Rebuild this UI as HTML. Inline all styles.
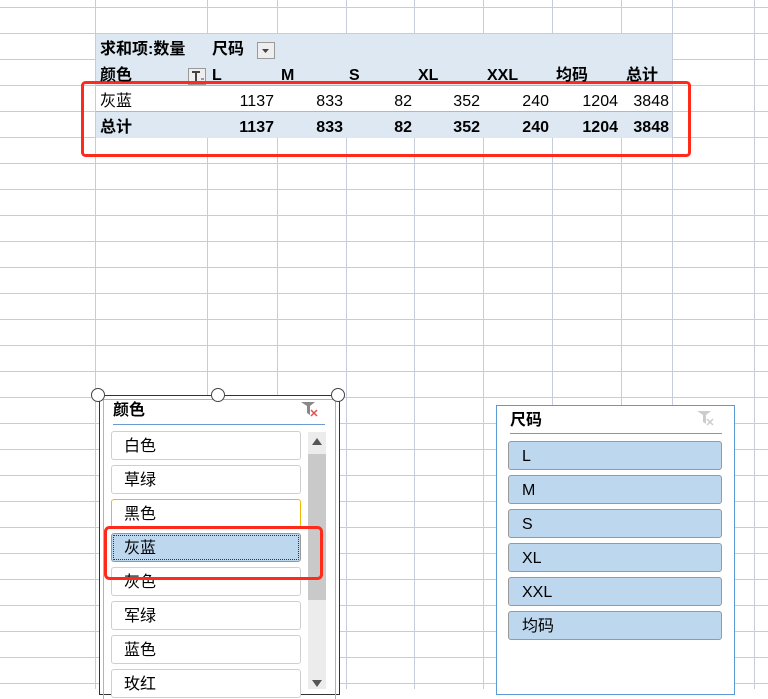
<!DOCTYPE html>
<html><head><meta charset="utf-8"><style>
body{margin:0;width:768px;height:689px;overflow:hidden;background:#fff;position:relative;font-family:"Liberation Sans","Noto Sans CJK SC",sans-serif;}
.a{position:absolute}
.t{position:absolute;font-size:16px;line-height:26px;white-space:nowrap;color:#000}
.r{text-align:right}
.b{font-weight:bold}
.it{position:absolute;left:111px;width:176px;height:27px;border:1px solid #cfcfcf;border-radius:3px;background:#fff;font-size:16px;line-height:29px;padding-left:12px;box-sizing:content-box}
.it2{position:absolute;left:508px;width:212px;height:27px;border:1px solid #999;border-radius:3px;background:#bdd7ee;font-size:16px;line-height:29px;text-indent:13px}
</style></head><body>
<svg class="a" style="left:0;top:0" width="768" height="689">
<g stroke="#c6ccda" stroke-width="1">
<line x1="95.5" y1="0" x2="95.5" y2="689"/><line x1="207.5" y1="0" x2="207.5" y2="689"/><line x1="277.5" y1="0" x2="277.5" y2="689"/><line x1="346.5" y1="0" x2="346.5" y2="689"/><line x1="414.5" y1="0" x2="414.5" y2="689"/><line x1="483.5" y1="0" x2="483.5" y2="689"/><line x1="552.5" y1="0" x2="552.5" y2="689"/><line x1="621.5" y1="0" x2="621.5" y2="689"/><line x1="672.5" y1="0" x2="672.5" y2="689"/><line x1="754.5" y1="0" x2="754.5" y2="689"/>
<line x1="0" y1="7.5" x2="768" y2="7.5"/><line x1="0" y1="33.5" x2="768" y2="33.5"/><line x1="0" y1="59.5" x2="768" y2="59.5"/><line x1="0" y1="85.5" x2="768" y2="85.5"/><line x1="0" y1="111.5" x2="768" y2="111.5"/><line x1="0" y1="137.5" x2="768" y2="137.5"/><line x1="0" y1="163.5" x2="768" y2="163.5"/><line x1="0" y1="189.5" x2="768" y2="189.5"/><line x1="0" y1="215.5" x2="768" y2="215.5"/><line x1="0" y1="241.5" x2="768" y2="241.5"/><line x1="0" y1="267.5" x2="768" y2="267.5"/><line x1="0" y1="293.5" x2="768" y2="293.5"/><line x1="0" y1="319.5" x2="768" y2="319.5"/><line x1="0" y1="345.5" x2="768" y2="345.5"/><line x1="0" y1="371.5" x2="768" y2="371.5"/><line x1="0" y1="397.5" x2="768" y2="397.5"/><line x1="0" y1="423.5" x2="768" y2="423.5"/><line x1="0" y1="449.5" x2="768" y2="449.5"/><line x1="0" y1="475.5" x2="768" y2="475.5"/><line x1="0" y1="501.5" x2="768" y2="501.5"/><line x1="0" y1="527.5" x2="768" y2="527.5"/><line x1="0" y1="553.5" x2="768" y2="553.5"/><line x1="0" y1="579.5" x2="768" y2="579.5"/><line x1="0" y1="605.5" x2="768" y2="605.5"/><line x1="0" y1="631.5" x2="768" y2="631.5"/><line x1="0" y1="657.5" x2="768" y2="657.5"/><line x1="0" y1="683.5" x2="768" y2="683.5"/>
</g>
<rect x="96" y="34" width="576" height="52" fill="#dde8f3"/>
<rect x="96" y="86" width="576" height="26" fill="#fff"/>
<rect x="96" y="112" width="576" height="26" fill="#dde8f3"/>
<line x1="96" y1="85.5" x2="672" y2="85.5" stroke="#9fbadb"/>
<line x1="96" y1="111.5" x2="672" y2="111.5" stroke="#9fbadb"/>
<rect x="257.5" y="42.5" width="17" height="16" fill="#eee" stroke="#999"/>
<path d="M262 49h7l-3.5 4z" fill="#444"/>
<rect x="188.5" y="68.5" width="17" height="16" fill="#eee" stroke="#999"/>
<path d="M192 72h8M196 72v9" stroke="#444" stroke-width="2"/><path d="M201 79h3" stroke="#444"/>
<rect x="82.5" y="82.5" width="607" height="73" rx="3" fill="none" stroke="#ff2a1a" stroke-width="3"/>
</svg>
<div class="t b" style="left:100px;top:37px">求和项:数量</div>
<div class="t b" style="left:212px;top:37px">尺码</div>
<div class="t b" style="left:100px;top:63px">颜色</div>
<div class="t b" style="left:212px;top:63px">L</div>
<div class="t b" style="left:281px;top:63px">M</div>
<div class="t b" style="left:349px;top:63px">S</div>
<div class="t b" style="left:418px;top:63px">XL</div>
<div class="t b" style="left:487px;top:63px">XXL</div>
<div class="t b" style="left:556px;top:63px">均码</div>
<div class="t b" style="left:626px;top:63px">总计</div>
<div class="t" style="left:100px;top:89px">灰蓝</div>
<div class="t b" style="left:100px;top:115px">总计</div>
<div class="t r" style="left:200px;width:74px;top:89px">1137</div>
<div class="t r" style="left:280px;width:63px;top:89px">833</div>
<div class="t r" style="left:350px;width:62px;top:89px">82</div>
<div class="t r" style="left:418px;width:62px;top:89px">352</div>
<div class="t r" style="left:487px;width:62px;top:89px">240</div>
<div class="t r" style="left:556px;width:62px;top:89px">1204</div>
<div class="t r" style="left:622px;width:47px;top:89px">3848</div>
<div class="t r b" style="left:200px;width:74px;top:115px">1137</div>
<div class="t r b" style="left:280px;width:63px;top:115px">833</div>
<div class="t r b" style="left:350px;width:62px;top:115px">82</div>
<div class="t r b" style="left:418px;width:62px;top:115px">352</div>
<div class="t r b" style="left:487px;width:62px;top:115px">240</div>
<div class="t r b" style="left:556px;width:62px;top:115px">1204</div>
<div class="t r b" style="left:622px;width:47px;top:115px">3848</div>

<!-- slicer 1 -->
<div class="a" style="left:99px;top:395px;width:241px;height:300px;background:#fff;border:1px solid #333;box-sizing:border-box"></div>
<div class="a" style="left:103px;top:399px;width:233px;height:300px;border:1px solid #9fb6d4;border-bottom:none;box-sizing:border-box"></div>
<div class="t b" style="left:113px;top:398px">颜色</div>
<div class="a" style="left:113px;top:424px;width:212px;height:1px;background:#6b9bd0"></div>
<svg class="a" style="left:298px;top:399px" width="24" height="20"><path d="M3 3h14l-5 4v9l-3-2v-7z" fill="#888"/><path d="M13 11l6 6M19 11l-6 6" stroke="#e05050" stroke-width="1.5"/></svg>
<div class="a" style="left:308px;top:432px;width:18px;height:257px;background:#ececec"></div>
<div class="a" style="left:308px;top:454px;width:18px;height:146px;background:#c9c9c9"></div>
<svg class="a" style="left:311px;top:436px" width="12" height="10"><path d="M1 9h10L6 2z" fill="#555"/></svg>
<svg class="a" style="left:311px;top:678px" width="12" height="10"><path d="M1 2h10L6 9z" fill="#555"/></svg>
<div class="it" style="top:431px">白色</div>
<div class="it" style="top:465px">草绿</div>
<div class="it" style="top:499px;border-color:#f5b800">黑色</div>
<div class="it" style="top:533px;background:#bdd7ee;border-color:#999;outline:1px dotted #333;outline-offset:-3px">灰蓝</div>
<div class="it" style="top:567px">灰色</div>
<div class="it" style="top:601px">军绿</div>
<div class="it" style="top:635px">蓝色</div>
<div class="it" style="top:669px">玫红</div>
<svg class="a" style="left:0;top:0" width="768" height="689">
<circle cx="98" cy="395" r="6.5" fill="#fff" stroke="#444"/>
<circle cx="218" cy="395" r="6.5" fill="#fff" stroke="#444"/>
<circle cx="338" cy="395" r="6.5" fill="#fff" stroke="#444"/>
<rect x="105.5" y="527.5" width="216" height="51" rx="4" fill="none" stroke="#ff2a1a" stroke-width="3"/>
</svg>

<!-- slicer 2 -->
<div class="a" style="left:496px;top:405px;width:239px;height:290px;background:#fff;border:1px solid #5b9bd5;box-sizing:border-box"></div>
<div class="t b" style="left:510px;top:408px">尺码</div>
<div class="a" style="left:510px;top:433px;width:212px;height:1px;background:#6b9bd0"></div>
<svg class="a" style="left:694px;top:408px" width="24" height="20"><path d="M3 3h14l-5 4v9l-3-2v-7z" fill="#ccc"/><path d="M13 11l6 6M19 11l-6 6" stroke="#ccc" stroke-width="1.5"/></svg>
<div class="it2" style="top:441px">L</div>
<div class="it2" style="top:475px">M</div>
<div class="it2" style="top:509px">S</div>
<div class="it2" style="top:543px">XL</div>
<div class="it2" style="top:577px">XXL</div>
<div class="it2" style="top:611px">均码</div>
</body></html>
